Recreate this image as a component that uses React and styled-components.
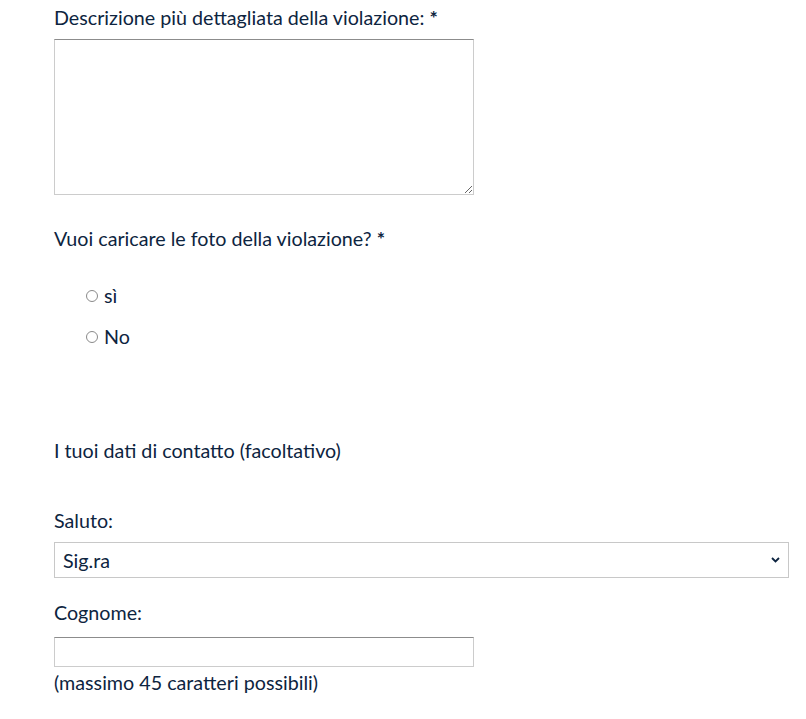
import React from "react";
import styled, { createGlobalStyle } from "styled-components";

const GlobalStyle = createGlobalStyle`
  html, body {
    margin: 0;
    padding: 0;
    background: #ffffff;
  }
  body {
    font-family: Lato, "Open Sans", sans-serif;
    color: #0d2440;
  }
`;

const Form = styled.form`
  display: flex;
  flex-direction: column;
  align-items: flex-start;
  padding: 7px 17px 0 54px;
`;

const Label = styled.label`
  display: block;
  font-size: 19.7px;
  line-height: 22px;
  margin-top: ${(p) => p.$top || 0}px;
`;

const Required = styled.b`
  font-weight: 700;
`;

const TextArea = styled.textarea`
  box-sizing: border-box;
  width: 420px;
  height: 156px;
  margin-top: 10px;
  border: 1px solid #cccccc;
  border-top-color: #8c8c8c;
  font-family: inherit;
  font-size: 16px;
  resize: vertical;
  outline: none;
`;

const RadioGroup = styled.div`
  display: flex;
  flex-direction: column;
  gap: 19px;
  margin-top: 35px;
  padding-left: 32px;
`;

const RadioRow = styled.label`
  display: flex;
  align-items: center;
  gap: 6px;
  font-size: 19.7px;
  line-height: 22px;
`;

const Radio = styled.span`
  box-sizing: border-box;
  width: 12px;
  height: 12px;
  border: 1px solid #8a8a8a;
  border-radius: 50%;
  background: #fff;
`;

const Select = styled.div`
  box-sizing: border-box;
  align-self: stretch;
  display: flex;
  align-items: center;
  justify-content: space-between;
  height: 36px;
  margin-top: 10px;
  padding: 0 8px 0 8px;
  border: 1px solid #c8c8c8;
  font-size: 19.7px;
`;

const Input = styled.div`
  box-sizing: border-box;
  width: 420px;
  height: 30px;
  margin-top: 13px;
  border: 1px solid #cccccc;
  border-top-color: #8c8c8c;
`;

const Hint = styled.div`
  font-size: 19.7px;
  line-height: 22px;
  margin-top: 5px;
`;

const Chevron = () => (
  <svg width="9" height="6" viewBox="0 0 9 6">
    <path d="M1 1 L4.5 4.5 L8 1" fill="none" stroke="#0d2440" strokeWidth="1.8" />
  </svg>
);

export default function App() {
  return (
    <>
      <GlobalStyle />
      <Form>
        <Label>
          Descrizione più dettagliata della violazione: <Required>*</Required>
        </Label>
        <TextArea />
        <Label $top={33}>
          Vuoi caricare le foto della violazione? <Required>*</Required>
        </Label>
        <RadioGroup>
          <RadioRow>
            <Radio />
            sì
          </RadioRow>
          <RadioRow>
            <Radio />
            No
          </RadioRow>
        </RadioGroup>
        <Label $top={92}>I tuoi dati di contatto (facoltativo)</Label>
        <Label $top={48}>Saluto:</Label>
        <Select>
          <span>Sig.ra</span>
          <Chevron />
        </Select>
        <Label $top={24}>Cognome:</Label>
        <Input />
        <Hint>(massimo 45 caratteri possibili)</Hint>
      </Form>
    </>
  );
}
